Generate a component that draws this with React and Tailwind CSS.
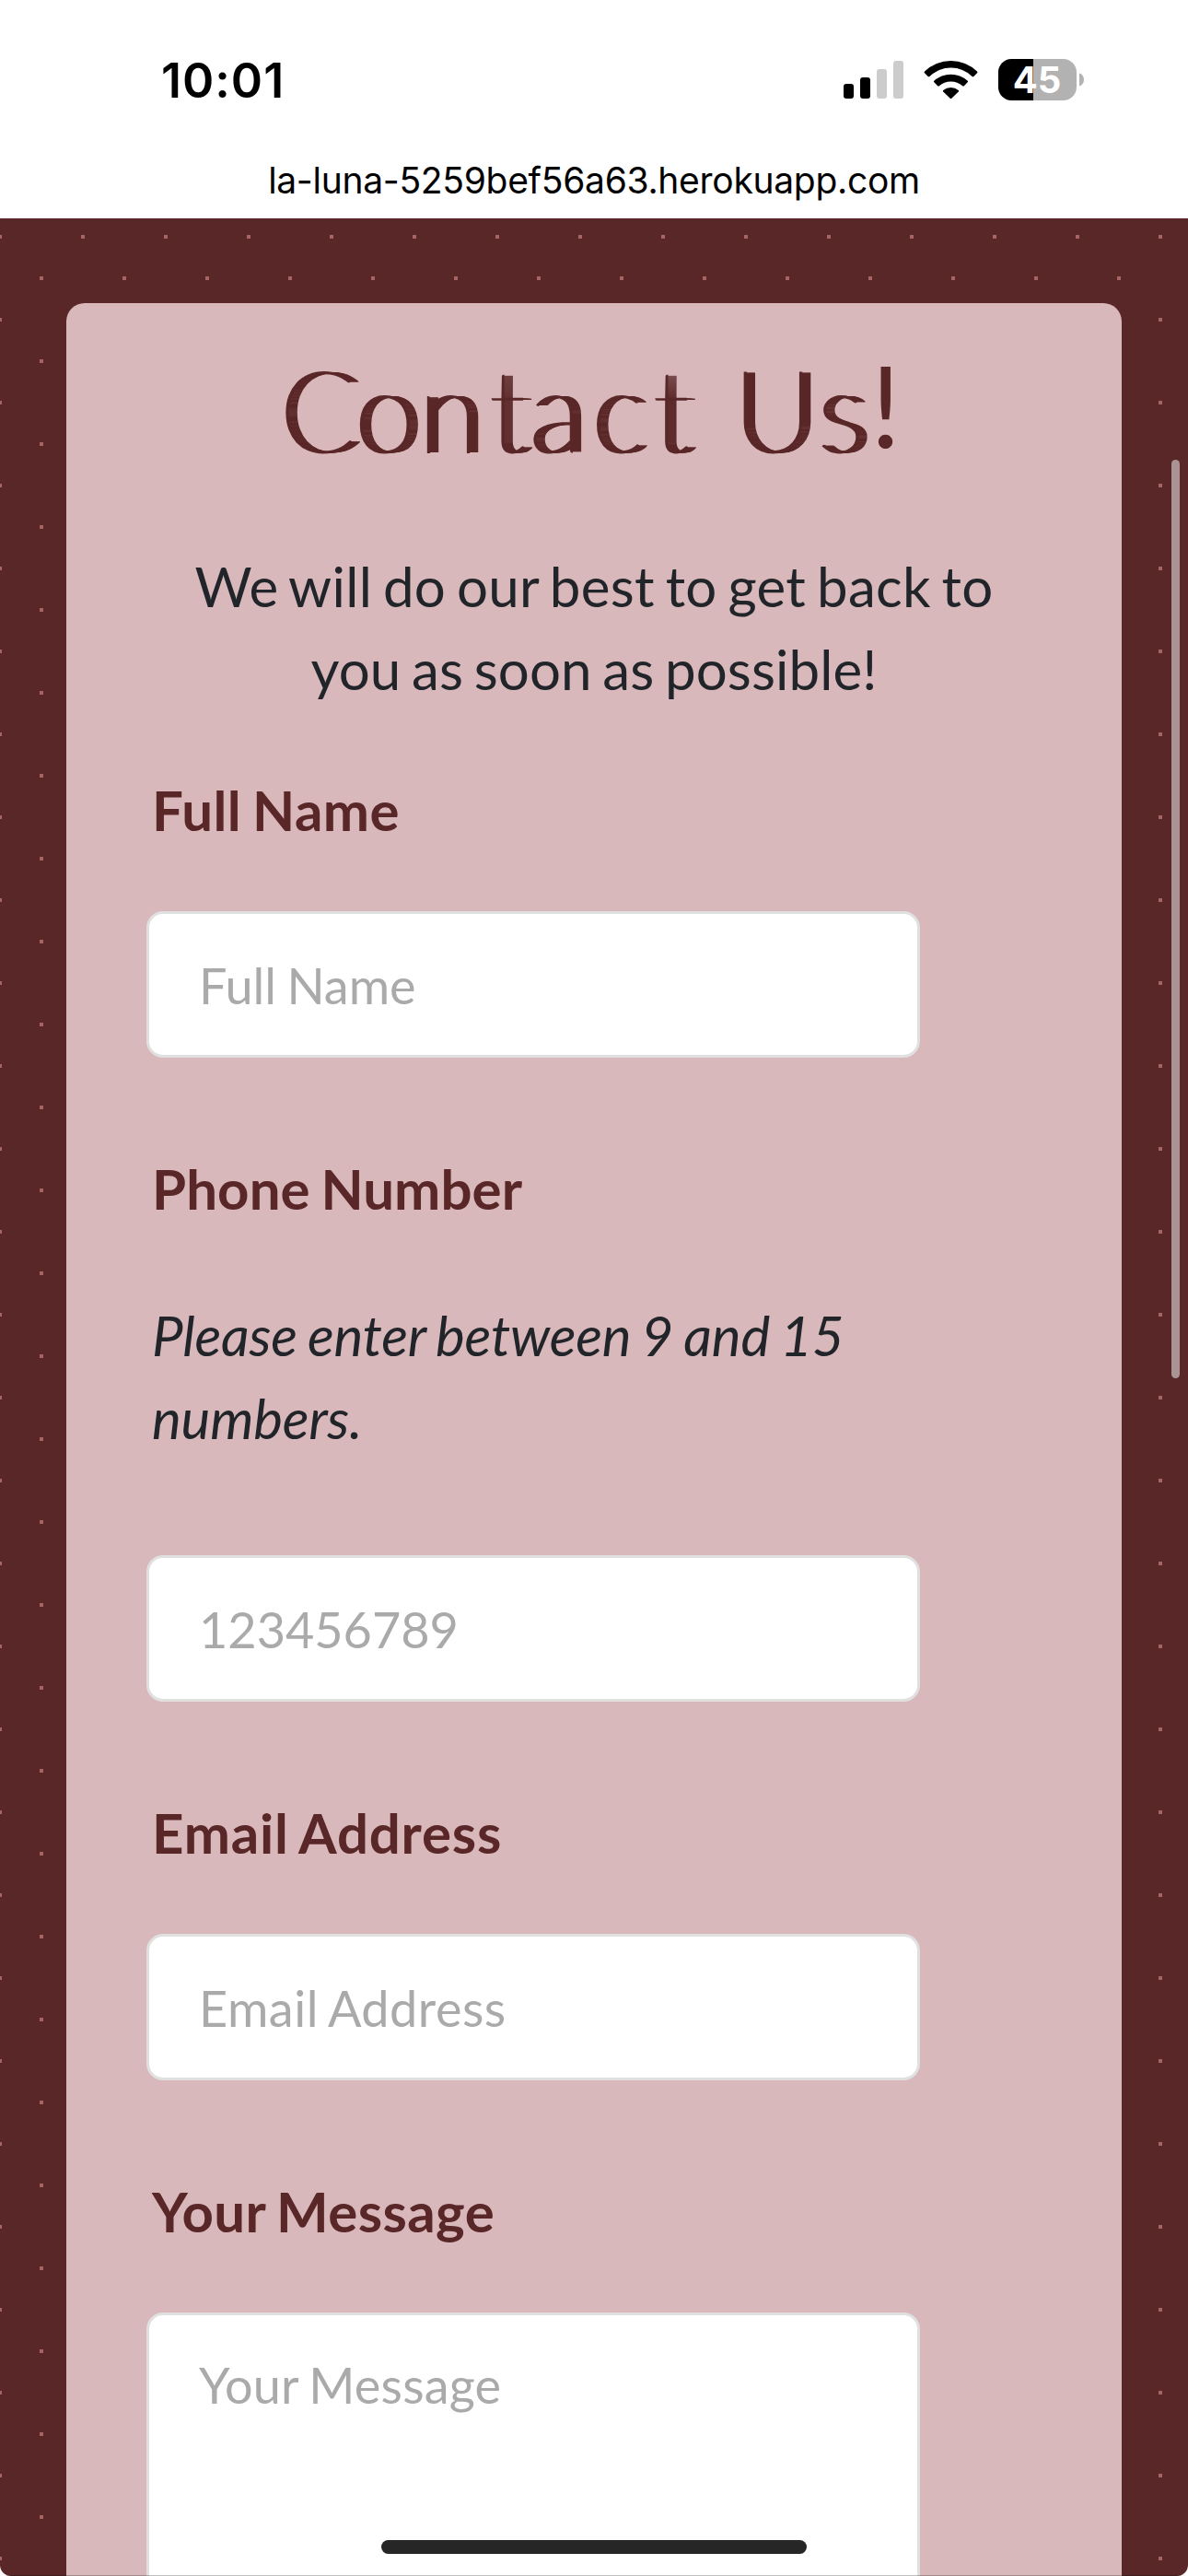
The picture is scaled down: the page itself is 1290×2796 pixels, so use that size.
function StatusIcons() {
  return (
    <svg width="264" height="48" viewBox="914 62 264 48" aria-hidden="true">
      <rect x="916" y="91" width="11" height="16" rx="3" fill="#000" />
      <rect x="934" y="84" width="11" height="23" rx="3" fill="#000" />
      <rect x="952" y="75" width="11" height="32" rx="3" fill="#ccc" />
      <rect x="970" y="66" width="11" height="41" rx="3" fill="#ccc" />
      <path d="M1004 77.5a41 41 0 0 1 57 0q.8.9 0 1.7l-3.7 3.700q-.8.8-1.700 0a33.300 33.300 0 0 0-46.200 0q-.9.8-1.700 0l-3.700-3.700q-.8-.8 0-1.700z" fill="#000" />
      <path d="M1014.300 87.700a27 27 0 0 1 36.400 0q.8.8 0 1.600l-3.900 3.900q-.8.8-1.600.1a19 19 0 0 0-25.400 0q-.8.7-1.600-.1l-3.900-3.900q-.8-.8 0-1.600z" fill="#000" />
      <path d="M1024.200 98.100a13 13 0 0 1 16.600 0q.7.7 0 1.400l-7.500 7.200q-.8.7-1.600 0l-7.500-7.200q-.7-.7 0-1.400z" fill="#000" />
      <defs>
        <clipPath id="battery">
          <rect x="1084" y="64" width="85" height="45" rx="14.500" />
        </clipPath>
      </defs>
      <g clipPath="url(#battery)">
        <rect x="1084" y="64" width="85" height="45" fill="#b2b2b2" />
        <rect x="1084" y="64" width="38" height="45" fill="#000" />
      </g>
      <path d="M1172 79.500q5 1.800 5 7t-5 7z" fill="#b2b2b2" />
      <text x="1126" y="101" textAnchor="middle" fill="#fff" className="font-['Inter',sans-serif] text-[40px] font-bold">45</text>
    </svg>
  );
}

function Dots() {
  return (
    <svg className="absolute inset-0 h-full w-full" aria-hidden="true">
      <defs>
        <pattern id="dots" x="-2" y="0" width="90" height="90" patternUnits="userSpaceOnUse">
          <rect x="0" y="18" width="4" height="4" fill="#a66463" />
          <rect x="45" y="63" width="4" height="4" fill="#a66463" />
        </pattern>
      </defs>
      <rect width="100%" height="100%" fill="url(#dots)" />
    </svg>
  );
}

const labelClass = "block pl-[6px] text-[60px] leading-[90px] font-bold text-[#5a2728] [word-spacing:-3px]";
const fieldClass =
  "block w-[840px] rounded-[18px] border-[3px] border-[#e0e0e0] bg-white px-[54px] text-[54px] leading-[65px] [word-spacing:-2.5px] placeholder:text-[#aaa] placeholder:opacity-100 outline-none";

function Field({ label, placeholder, help, className, tracking = "", inputTracking = "" }) {
  return (
    <div className={className}>
      <label className={labelClass + " " + tracking}>{label}</label>
      {help && (
        <p className="mt-[69px] mb-[104px] w-[840px] pl-[6px] text-[60px] leading-[90px] tracking-[-0.2px] text-[#212529] italic [word-spacing:-2.6px]">
          {help}
        </p>
      )}
      <input className={fieldClass + " h-[159px] pt-[2px] " + inputTracking + (help ? "" : " mt-[65px]")} placeholder={placeholder} />
    </div>
  );
}

export default function App() {
  return (
    <div className="flex h-[2796px] w-[1290px] flex-col overflow-hidden bg-white font-['Lato',sans-serif]">
      <header className="h-[237px] shrink-0 font-['Inter',sans-serif] text-black">
        <div className="flex h-[172px] items-start justify-between pr-[112px] pl-[175px]">
          <span className="pt-[56px] text-[52px] leading-[64px] font-semibold tracking-[1px]">10:01</span>
          <div className="pt-[62px]">
            <StatusIcons />
          </div>
        </div>
        <div className="text-center text-[39px] leading-[48px] tracking-[-0.3px]">la-luna-5259bef56a63.herokuapp.com</div>
      </header>

      <main className="relative h-[2559px] overflow-hidden rounded-b-[12px] bg-[#5a2728] px-[72px] pt-[92px]">
        <Dots />
        <section className="relative h-[2600px] rounded-t-[20px] bg-[#d8b8ba] pl-[87px]">
          <h1 className="-ml-[87px] h-[262px] pt-[35px] pl-[231px] text-[122px] leading-[150px] font-thin whitespace-pre text-[#5a2728] [-webkit-text-stroke:1.8px_#5a2728] [text-shadow:1px_0,2px_0,3px_0,4px_0,5px_0,6px_0,7px_0,8px_0,9px_0,10px_0]">
            <span className="tracking-[-2px]">C</span>
            <span className="tracking-[2px]">o</span>
            <span className="tracking-[11px]">n</span>
            <span className="tracking-[3px]">t</span>
            <span className="tracking-[10px]">a</span>
            <span className="tracking-[10px]">c</span>
            <span>t</span>
            <span className="tracking-[12px]"> </span>
            <span className="tracking-[4px]">U</span>
            <span className="tracking-[7px]">s</span>
            <span className="align-[5px] font-normal [-webkit-text-stroke:0] [text-shadow:none]">!</span>
          </h1>
          <p className="-ml-[87px] text-center text-[60px] leading-[90px] tracking-[0.3px] text-[#212529] [word-spacing:-3.8px]">
            We will do our best to get back to
            <br />
            <span className="tracking-[0.1px]">you as soon as possible!</span>
          </p>
          <form>
            <Field className="mt-[63px]" label="Full Name" placeholder="Full Name" tracking="tracking-[0.4px]" />
            <Field
              className="mt-[97px]"
              label="Phone Number"
              placeholder="123456789"
              help="Please enter between 9 and 15 numbers."
              tracking="tracking-[0.1px]"
            />
            <Field
              className="mt-[97px]"
              label="Email Address"
              placeholder="Email Address"
              tracking="tracking-[0.8px]"
              inputTracking="tracking-[0.5px]"
            />
            <div className="mt-[97px]">
              <label className={labelClass + " tracking-[0.4px]"}>Your Message</label>
              <textarea
                className={fieldClass + " mt-[65px] h-[400px] resize-none pt-[43px] tracking-[0.2px]"}
                placeholder="Your Message"
              />
            </div>
          </form>
        </section>
        <div className="absolute top-[262px] right-[9px] h-[997px] w-[9px] rounded-full bg-[#aa9394]" />
        <div className="absolute bottom-[24px] left-[414px] h-[15px] w-[462px] rounded-full bg-[#262626]" />
        <div className="absolute inset-x-0 bottom-0 h-px bg-black/25" />
      </main>
    </div>
  );
}
